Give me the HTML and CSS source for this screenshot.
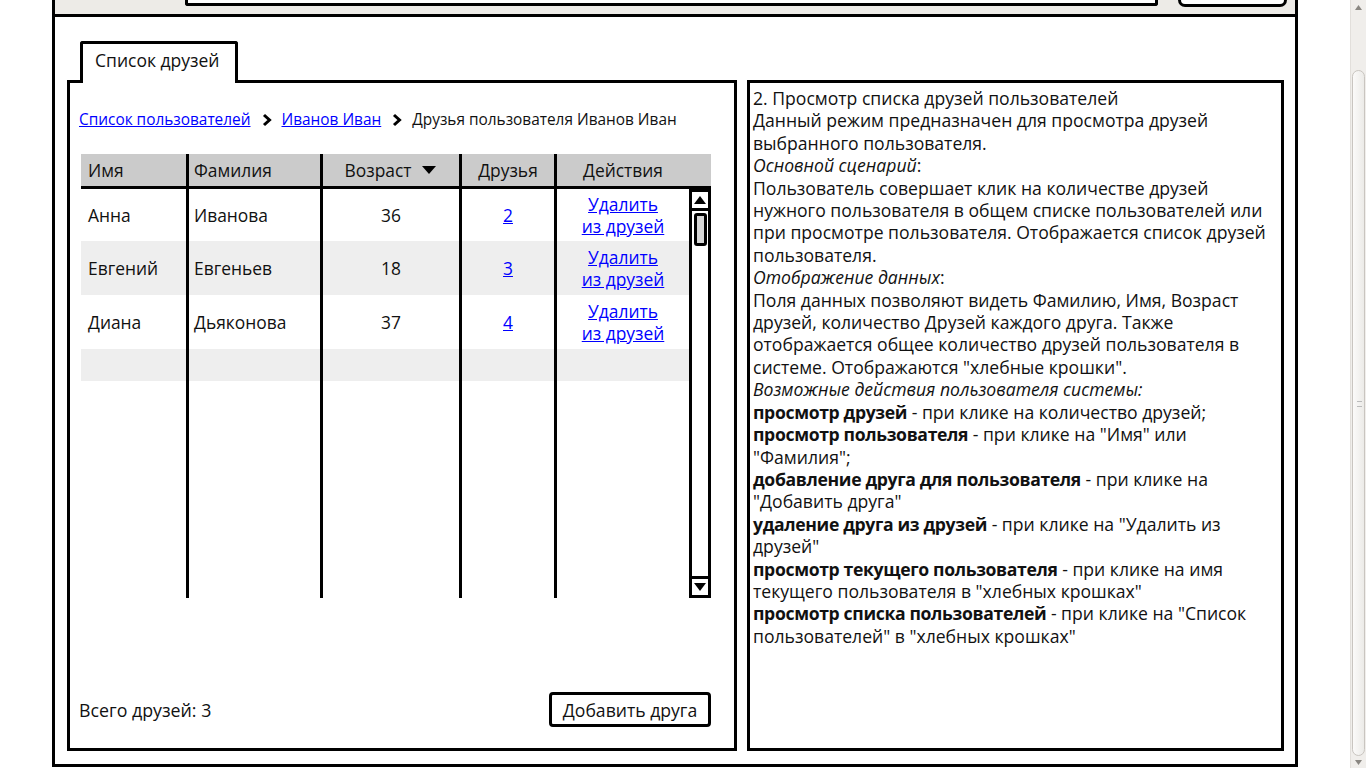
FILE: index.html
```html
<!DOCTYPE html>
<html lang="ru">
<head>
<meta charset="utf-8">
<title>Список друзей</title>
<link rel="stylesheet" href="styles.css">
</head>
<body>
<div class="stage">
  <div class="browser">
    <div class="topbar">
      <div class="address"></div>
      <div class="gobtn"></div>
    </div>
    <div class="main">
      <div class="leftcol">
        <div class="tab">Список друзей</div>
        <div class="panel">
          <div class="crumbs">
            <a href="#" class="link">Список пользователей</a>
            <svg class="chev" width="10" height="14" viewBox="0 0 10 14"><polyline points="2,2 7.5,7 2,12" fill="none" stroke="#000" stroke-width="3"/></svg>
            <a href="#" class="link">Иванов Иван</a>
            <svg class="chev" width="10" height="14" viewBox="0 0 10 14"><polyline points="2,2 7.5,7 2,12" fill="none" stroke="#000" stroke-width="3"/></svg>
            <span>Друзья пользователя Иванов Иван</span>
          </div>
          <div class="grid">
            <div class="hc left">Имя</div>
            <div class="hc left div">Фамилия</div>
            <div class="hc center div">Возраст <svg class="sort" width="16" height="10" viewBox="0 0 16 10"><polygon points="1,1 15,1 8,9" fill="#000"/></svg></div>
            <div class="hc center div">Друзья</div>
            <div class="hc center div">Действия</div>
            <div class="hc"></div>

            <div class="c left">Анна</div>
            <div class="c left div">Иванова</div>
            <div class="c center div">36</div>
            <div class="c center div"><a href="#" class="link">2</a></div>
            <div class="c center div act"><a href="#" class="link">Удалить<br>из друзей</a></div>

            <div class="c left alt">Евгений</div>
            <div class="c left div alt">Евгеньев</div>
            <div class="c center div alt">18</div>
            <div class="c center div alt"><a href="#" class="link">3</a></div>
            <div class="c center div act alt"><a href="#" class="link">Удалить<br>из друзей</a></div>

            <div class="c left">Диана</div>
            <div class="c left div">Дьяконова</div>
            <div class="c center div">37</div>
            <div class="c center div"><a href="#" class="link">4</a></div>
            <div class="c center div act"><a href="#" class="link">Удалить<br>из друзей</a></div>

            <div class="c alt"></div>
            <div class="c div alt"></div>
            <div class="c div alt"></div>
            <div class="c div alt"></div>
            <div class="c div alt"></div>

            <div class="c"></div>
            <div class="c div"></div>
            <div class="c div"></div>
            <div class="c div"></div>
            <div class="c div"></div>

            <div class="tscroll">
              <div class="tarrow up"><svg width="14" height="10" viewBox="0 0 14 10"><polygon points="7,1 13,9 1,9" fill="#000"/></svg></div>
              <div class="tthumb"></div>
              <div class="tarrow down"><svg width="14" height="10" viewBox="0 0 14 10"><polygon points="1,1 13,1 7,9" fill="#000"/></svg></div>
            </div>
          </div>
          <div class="footer">
            <span>Всего друзей: 3</span>
            <button class="btn">Добавить друга</button>
          </div>
        </div>
      </div>
      <div class="desc">
        2. Просмотр списка друзей пользователей<br>
        Данный режим предназначен для просмотра друзей<br>
        выбранного пользователя.<br>
        <i>Основной сценарий</i>:<br>
        Пользователь совершает клик на количестве друзей<br>
        нужного пользователя в общем списке пользователей или<br>
        при просмотре пользователя. Отображается список друзей<br>
        пользователя.<br>
        <i>Отображение данных</i>:<br>
        Поля данных позволяют видеть Фамилию, Имя, Возраст<br>
        друзей, количество Друзей каждого друга. Также<br>
        отображается общее количество друзей пользователя в<br>
        системе. Отображаются "хлебные крошки".<br>
        <i>Возможные действия пользователя системы:</i><br>
        <b>просмотр друзей</b> - при клике на количество друзей;<br>
        <b>просмотр пользователя</b> - при клике на "Имя" или<br>
        "Фамилия";<br>
        <b>добавление друга для пользователя</b> - при клике на<br>
        "Добавить друга"<br>
        <b>удаление друга из друзей</b> - при клике на "Удалить из<br>
        друзей"<br>
        <b>просмотр текущего пользователя</b> - при клике на имя<br>
        текущего пользователя в "хлебных крошках"<br>
        <b>просмотр списка пользователей</b> - при клике на "Список<br>
        пользователей" в "хлебных крошках"
      </div>
    </div>
  </div>
</div>
<div class="vscroll">
  <div class="vs-up"><svg width="7" height="5" viewBox="0 0 7 5"><polygon points="3.5,0 7,5 0,5" fill="#8a8782"/></svg></div>
  <div class="vs-track">
    <div class="vs-thumb"><span class="grip"></span></div>
  </div>
  <div class="vs-down"><svg width="7" height="5" viewBox="0 0 7 5"><polygon points="0,0 7,0 3.5,5" fill="#8a8782"/></svg></div>
</div>
</body>
</html>
```
FILE: styles.css
```css
* { box-sizing: border-box; }
html, body { margin: 0; padding: 0; }
body {
  width: 1366px;
  height: 768px;
  overflow: hidden;
  background: #fff;
  display: flex;
  font-family: "Open Sans", "DejaVu Sans", sans-serif;
  color: #111;
}
.stage {
  width: 1350px;
  height: 768px;
  padding: 0 52px;
}
.browser {
  height: 767px;
  border-left: 3px solid #000;
  border-right: 3px solid #000;
  display: flex;
  flex-direction: column;
}
.topbar {
  height: 17px;
  flex: none;
  background: #edebe7;
  border-bottom: 3px solid #000;
  display: flex;
  align-items: flex-start;
  padding-left: 130px;
  gap: 20px;
}
.address {
  width: 973px;
  height: 6px;
  background: #fff;
  border: 3px solid #000;
  border-top: none;
  border-radius: 0 0 3px 3px;
}
.gobtn {
  width: 109px;
  height: 7px;
  background: #fff;
  border: 3px solid #000;
  border-top: none;
  border-radius: 0 0 9px 9px;
}
.main {
  flex: 1;
  background: #fff;
  border-bottom: 3px solid #000;
  display: flex;
  gap: 10px;
  padding: 24px 11px 13px 12px;
}
.leftcol {
  width: 670px;
  flex: none;
  display: flex;
  flex-direction: column;
}
.tab {
  position: relative;
  z-index: 1;
  margin-left: 13px;
  width: 158px;
  height: 42px;
  margin-bottom: -3px;
  background: #fff;
  border: 3px solid #000;
  border-bottom: none;
  border-radius: 3px 3px 0 0;
  padding: 5px 0 0 12px;
  font-size: 17.5px;
  line-height: 22px;
  white-space: nowrap;
}
.panel {
  flex: 1;
  border: 3px solid #000;
  display: flex;
  flex-direction: column;
  padding: 26px 23px 21px 9px;
  font-size: 17.4px;
}
.crumbs {
  display: flex;
  align-items: center;
  line-height: 22px;
  height: 22px;
  white-space: nowrap;
  font-size: 15.4px;
}
.chev { margin: 0 10px 0 11px; flex: none; }
.link { color: #0000ff; text-decoration: underline; }
.grid {
  margin: 23px 0 0 2px;
  width: 630px;
  display: grid;
  grid-template-columns: 105px 134px 139px 95px 135px 22px;
  grid-template-rows: 35px 52px 54px 54px 32px 217px;
  line-height: 22px;
}
.hc {
  background: #cbcbcb;
  border-bottom: 3px solid #000;
  display: flex;
  align-items: center;
  white-space: nowrap;
}
.c {
  display: flex;
  align-items: center;
  white-space: nowrap;
}
.left { padding-left: 7px; }
.div { border-left: 3px solid #000; }
.div.left { padding-left: 5px; }
.center { justify-content: center; text-align: center; }
.alt { background: #eeeeee; }
.sort { margin-left: 10px; }
.act { line-height: 22px; }
.tscroll {
  grid-column: 6;
  grid-row: 2 / 7;
  border: 3px solid #000;
  display: flex;
  flex-direction: column;
  background: #fff;
}
.tarrow {
  height: 19px;
  display: flex;
  align-items: center;
  justify-content: center;
}
.tarrow.up { border-bottom: 3px solid #000; }
.tarrow.down { border-top: 3px solid #000; margin-top: auto; }
.tthumb {
  margin: 2px auto 0;
  width: 13px;
  height: 33px;
  border: 3px solid #000;
  border-radius: 3px;
  background: #d6d6d6;
}
.footer {
  margin-top: auto;
  display: flex;
  align-items: center;
  justify-content: space-between;
  font-size: 17.8px;
}
.btn {
  width: 162px;
  height: 35px;
  background: #fff;
  border: 3px solid #000;
  border-radius: 4px;
  font-family: inherit;
  font-size: 17.6px;
  color: #111;
  padding: 0;
}
.desc {
  flex: 1;
  margin-top: 39px;
  border: 3px solid #000;
  padding: 4px 4px 3px 3px;
  font-size: 17.6px;
  line-height: 22.4px;
  white-space: nowrap;
  overflow: hidden;
}
.desc b { font-weight: 700; letter-spacing: -0.35px; }
.vscroll {
  width: 16px;
  height: 768px;
  display: flex;
  flex-direction: column;
  background: #f0eeeb;
  border-left: 1px solid #e2dfdb;
}
.vs-up {
  height: 14px;
  display: flex;
  align-items: center;
  justify-content: center;
}
.vs-track {
  flex: 1;
  padding-top: 56px;
  display: flex;
  flex-direction: column;
}
.vs-thumb {
  flex: 1;
  margin: 0 1px;
  border: 1px solid #c9c5c0;
  border-radius: 7px;
  background: linear-gradient(to right, #fbfaf9, #ecebe8);
  position: relative;
}
.grip {
  position: absolute;
  left: 4px;
  top: 330px;
  width: 5px;
  height: 6px;
  border-top: 1px solid #bbb;
  border-bottom: 1px solid #bbb;
}
.vs-down {
  height: 12px;
  display: flex;
  align-items: center;
  justify-content: center;
}
```
